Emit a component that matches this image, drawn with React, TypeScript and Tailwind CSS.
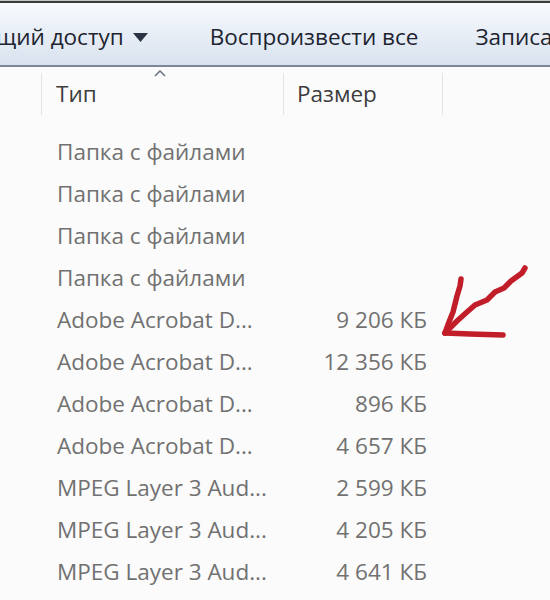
const ROWS: [string, string][] = [
  ['Папка с файлами', ''],
  ['Папка с файлами', ''],
  ['Папка с файлами', ''],
  ['Папка с файлами', ''],
  ['Adobe Acrobat D...', '9 206 КБ'],
  ['Adobe Acrobat D...', '12 356 КБ'],
  ['Adobe Acrobat D...', '896 КБ'],
  ['Adobe Acrobat D...', '4 657 КБ'],
  ['MPEG Layer 3 Aud...', '2 599 КБ'],
  ['MPEG Layer 3 Aud...', '4 205 КБ'],
  ['MPEG Layer 3 Aud...', '4 641 КБ'],
];

function Arrow() {
  return (
    <svg className="absolute left-0 top-0" width="550" height="600" viewBox="0 0 550 600" fill="none">
      <g stroke="#c21e2a" strokeWidth="5.5" strokeLinecap="round" strokeLinejoin="round">
        <polyline points="525,268 522,273 511,281 504,288 495,292 487,300 475,305 467,312 457,321 445,333" />
        <polyline points="461,279 460,286 457,296 453,312 449,322 445,333" />
        <polyline points="445,333 470,334 503,335" />
      </g>
    </svg>
  );
}

export default function App() {
  return (
    <div className="relative h-[600px] w-[550px] overflow-hidden bg-[#fbfbfb] font-['Open_Sans',sans-serif]">
      <div className="h-px bg-[#c4c4c4]" />
      <div className="h-[2px] bg-[#3b3b3b]" />

      <div className="flex h-[62px] items-center whitespace-nowrap bg-gradient-to-b from-[#f8fafd] to-[#d8e2ef] pt-[6px] text-[22.5px] text-[#1d2430]">
        <div className="ml-[-4px] flex items-center gap-[9px]">
          <span>щий доступ</span>
          <svg width="15" height="9" viewBox="0 0 15 9">
            <path d="M0 0h15L7.5 9z" fill="#2a3442" />
          </svg>
        </div>
        <span className="ml-[62px]">Воспроизвести все</span>
        <span className="ml-[57px]">Записать</span>
      </div>
      <div className="h-[2px] bg-[#7e8797]" />

      <div className="relative flex h-[48px] pt-[6px] text-[22.5px] text-[#3d3d3d]">
        <div className="w-[42px] border-r border-[#e4e4e4]" />
        <div className="relative flex w-[242px] items-center border-r border-[#e4e4e4] pl-[14px]">
          Тип
          <svg className="absolute left-[112px] top-[-3px]" width="12" height="7" viewBox="0 0 12 7">
            <path d="M1 6l5-5 5 5" stroke="#6c7888" strokeWidth="1.6" fill="none" />
          </svg>
        </div>
        <div className="flex w-[159px] items-center border-r border-[#e4e4e4] pl-[13px]">Размер</div>
      </div>

      <div className="pt-[16px] text-[22.5px] text-[#717171]">
        {ROWS.map(([type, size], i) => (
          <div key={i} className="flex h-[42px] items-center">
            <div className="w-[57px]" />
            <div className="w-[230px] whitespace-nowrap">{type}</div>
            <div className="w-[140px] text-right">{size}</div>
          </div>
        ))}
      </div>

      <Arrow />
    </div>
  );
}
